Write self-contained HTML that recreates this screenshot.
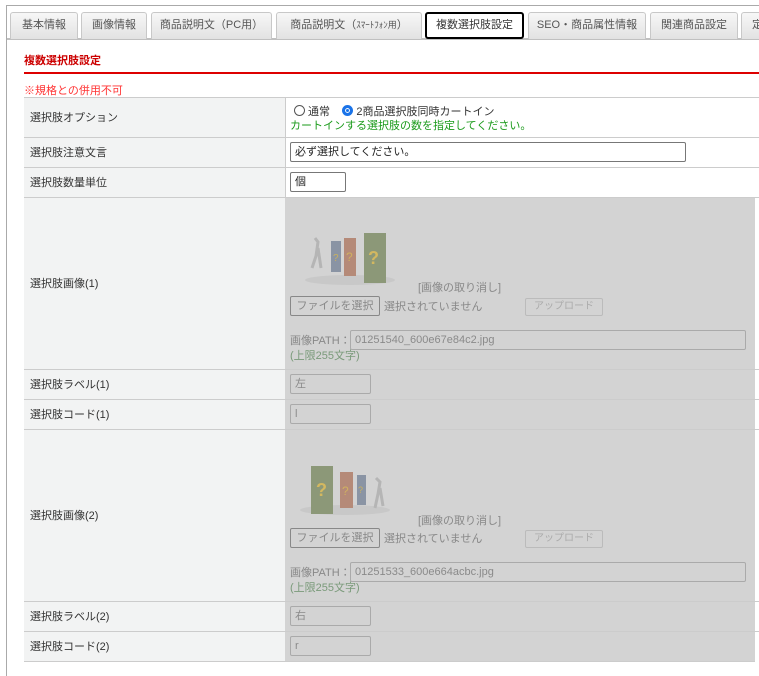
<!DOCTYPE html>
<html><head><meta charset="utf-8"><style>
*{box-sizing:border-box;margin:0;padding:0}
body{width:759px;height:676px;overflow:hidden;background:#fff;font-family:"Liberation Sans","Noto Sans CJK JP",sans-serif;font-size:11px;color:#333;position:relative}
.a{position:absolute}
.tab{position:absolute;top:12px;height:27px;border:1px solid #c8c8c8;border-bottom:none;border-radius:3px 3px 0 0;background:linear-gradient(#f7f7f7,#e2e2e2);text-align:center;line-height:25px;color:#555;font-size:11px;white-space:nowrap;overflow:hidden}
.tab.on{background:#fff;border:2px solid #000;border-radius:3px;color:#333;height:27px;line-height:23px}
.lab{position:absolute;left:24px;width:261px;background:#f2f3f3;padding-left:6px;padding-bottom:2px;display:flex;align-items:center;color:#333}
.hl{position:absolute;left:24px;right:0;height:1px;background:#ccc}
.inp{position:absolute;border:1px solid #777;border-radius:2px;background:#fff;padding-left:4px;line-height:18px;height:20px;color:#222}
.ginp{position:absolute;border:1px solid #aaa;border-radius:2px;padding-left:4px;color:#8a8a8a;line-height:18px;height:20px}
.btn{position:absolute;border:1px solid #999;border-radius:2px;background:#ddd;color:#888;text-align:center;line-height:18px;height:20px}
.g{color:#7a9a7a}
</style></head><body>
<div class="a" style="left:6px;top:5px;right:0;height:1px;background:#aaa"></div>
<div class="a" style="left:6px;top:5px;width:1px;bottom:0;background:#aaa"></div>
<div class="a" style="left:7px;top:38px;right:0;height:2px;background:#c0c0c0"></div>
<div class="tab" style="left:10px;width:68px">基本情報</div>
<div class="tab" style="left:81px;width:66px">画像情報</div>
<div class="tab" style="left:151px;width:121px">商品説明文（PC用）</div>
<div class="tab" style="left:276px;width:146px">商品説明文（<span style="font-size:9px">ｽﾏｰﾄﾌｫﾝ用</span>）</div>
<div class="tab on" style="left:425px;width:99px">複数選択肢設定</div>
<div class="tab" style="left:528px;width:118px">SEO・商品属性情報</div>
<div class="tab" style="left:650px;width:88px">関連商品設定</div>
<div class="tab" style="left:741px;width:30px;text-align:left;padding-left:10px">定</div>

<div class="a" style="left:24px;top:52px;color:#c00;font-weight:bold;font-size:11px">複数選択肢設定</div>
<div class="a" style="left:24px;top:72px;right:0;height:2px;background:#d00"></div>
<div class="a" style="left:24px;top:82px;color:#f33;font-size:11px">※規格との併用不可</div>

<div class="a" style="left:24px;top:97px;width:1px;height:565px;background:#ccc"></div>
<div class="lab" style="top:98px;height:40px">選択肢オプション</div>
<div class="lab" style="top:138px;height:30px">選択肢注意文言</div>
<div class="lab" style="top:168px;height:30px">選択肢数量単位</div>
<div class="lab" style="top:198px;height:172px">選択肢画像(1)</div>
<div class="lab" style="top:370px;height:30px">選択肢ラベル(1)</div>
<div class="lab" style="top:400px;height:30px">選択肢コード(1)</div>
<div class="lab" style="top:430px;height:172px">選択肢画像(2)</div>
<div class="lab" style="top:602px;height:30px">選択肢ラベル(2)</div>
<div class="lab" style="top:632px;height:30px">選択肢コード(2)</div>
<div class="a" style="left:285px;top:97px;width:1px;height:565px;background:#ccc"></div>

<div class="a" style="left:285px;top:198px;width:470px;height:464px;background:#d3d3d3"></div>

<div class="hl" style="top:97px"></div><div class="hl" style="top:137px"></div><div class="hl" style="top:167px"></div><div class="hl" style="top:197px"></div><div class="hl" style="top:369px"></div><div class="hl" style="top:399px"></div><div class="hl" style="top:429px"></div><div class="hl" style="top:601px"></div><div class="hl" style="top:631px"></div><div class="a" style="left:24px;width:731px;top:661px;height:1px;background:#ccc"></div>

<div class="a" style="left:294px;top:103px;white-space:nowrap">
<span style="display:inline-block;width:11px;height:11px;border:1px solid #555;border-radius:50%;vertical-align:-1px"></span> 通常&nbsp;&nbsp;&nbsp;
<span style="display:inline-block;width:11px;height:11px;border:3px solid #1a73e8;border-radius:50%;vertical-align:-1px;box-shadow:inset 0 0 0 1px #fff;background:#1a73e8"></span> 2商品選択肢同時カートイン</div>
<div class="a" style="left:290px;top:117px;color:#1a9a1a;white-space:nowrap">カートインする選択肢の数を指定してください。</div>
<div class="inp" style="left:290px;top:142px;width:396px">必ず選択してください。</div>
<div class="inp" style="left:290px;top:172px;width:56px">個</div>

<svg class="a" style="left:300px;top:228px" width="95" height="60">
<ellipse cx="50" cy="52" rx="45" ry="5" fill="#c8c8c8"/>
<path d="M15 10 l3 4 l-2 14 l-4 12 M18 20 l3 20" stroke="#b5b5b5" stroke-width="3" fill="none"/>
<rect x="31" y="13" width="10" height="31" fill="#8a94a4"/><text x="33" y="33" font-size="10" fill="#c8b060" font-family="Liberation Sans">?</text>
<rect x="44" y="10" width="12" height="38" fill="#b58a78"/><text x="46" y="33" font-size="12" fill="#d0b060" font-family="Liberation Sans">?</text>
<rect x="64" y="5" width="22" height="50" fill="#8c9878"/><text x="68" y="36" font-size="18" font-weight="bold" fill="#d3b860" font-family="Liberation Sans">?</text>
</svg>
<div class="a" style="left:418px;top:279px;color:#888">[画像の取り消し]</div>
<div class="btn" style="left:290px;top:296px;width:90px;background:#d3d3d3;border-color:#888">ファイルを選択</div>
<div class="a" style="left:384px;top:298px;color:#888">選択されていません</div>
<div class="btn" style="left:525px;top:298px;width:78px;height:18px;line-height:16px;font-size:10px;border-color:#bbb;background:#d3d3d3;color:#aaa">アップロード</div>
<div class="a" style="left:290px;top:332px;color:#888">画像PATH：</div>
<div class="ginp" style="left:350px;top:330px;width:396px">01251540_600e67e84c2.jpg</div>
<div class="a g" style="left:290px;top:347px">(上限255文字)</div>
<div class="ginp" style="left:290px;top:374px;width:81px">左</div>
<div class="ginp" style="left:290px;top:404px;width:81px">l</div>

<svg class="a" style="left:300px;top:460px" width="95" height="60">
<ellipse cx="45" cy="50" rx="45" ry="5" fill="#c8c8c8"/>
<rect x="11" y="6" width="22" height="48" fill="#8c9878"/><text x="16" y="36" font-size="18" font-weight="bold" fill="#d3b860" font-family="Liberation Sans">?</text>
<rect x="40" y="12" width="13" height="36" fill="#b58a78"/><text x="42" y="35" font-size="12" fill="#d0b060" font-family="Liberation Sans">?</text>
<rect x="57" y="15" width="9" height="30" fill="#8a94a4"/><text x="58" y="33" font-size="9" fill="#c8b060" font-family="Liberation Sans">?</text>
<path d="M76 18 l4 4 l-2 12 l-3 14 M80 28 l3 18" stroke="#b5b5b5" stroke-width="3" fill="none"/>
</svg>
<div class="a" style="left:418px;top:512px;color:#888">[画像の取り消し]</div>
<div class="btn" style="left:290px;top:528px;width:90px;background:#d3d3d3;border-color:#888">ファイルを選択</div>
<div class="a" style="left:384px;top:530px;color:#888">選択されていません</div>
<div class="btn" style="left:525px;top:530px;width:78px;height:18px;line-height:16px;font-size:10px;border-color:#bbb;background:#d3d3d3;color:#aaa">アップロード</div>
<div class="a" style="left:290px;top:564px;color:#888">画像PATH：</div>
<div class="ginp" style="left:350px;top:562px;width:396px">01251533_600e664acbc.jpg</div>
<div class="a g" style="left:290px;top:579px">(上限255文字)</div>
<div class="ginp" style="left:290px;top:606px;width:81px">右</div>
<div class="ginp" style="left:290px;top:636px;width:81px">r</div>
</body></html>
